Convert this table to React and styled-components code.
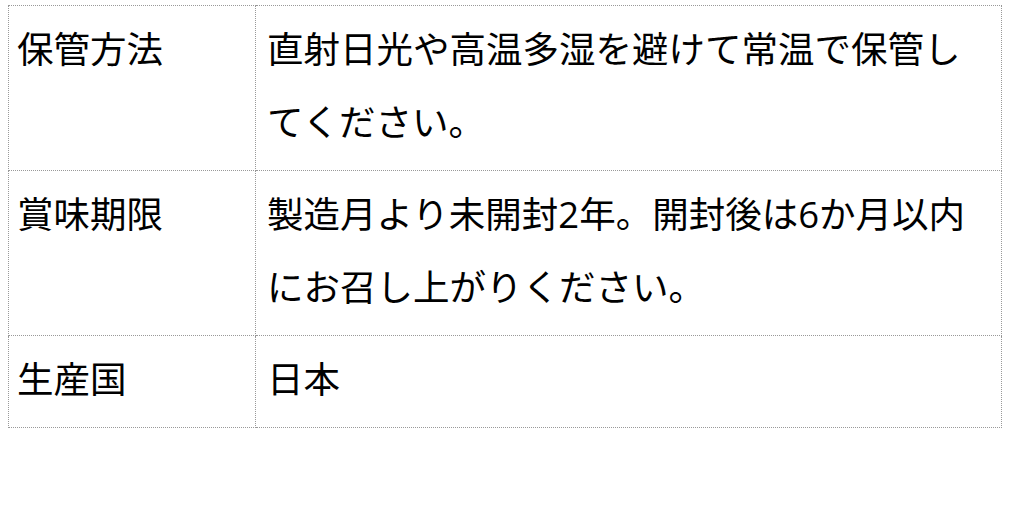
import styled, { createGlobalStyle } from 'styled-components';

const GlobalStyle = createGlobalStyle`
  html, body {
    margin: 0;
    padding: 0;
    background: #fff;
  }
  body {
    font-family: "Open Sans", "Noto Sans CJK JP", sans-serif;
    color: #000;
  }
`;

const specs = [
  { label: '保管方法', value: '直射日光や高温多湿を避けて常温で保管してください。' },
  { label: '賞味期限', value: '製造月より未開封2年。開封後は6か月以内にお召し上がりください。' },
  { label: '生産国', value: '日本' },
];

const App = () => (
  <>
    <GlobalStyle />
    <SpecTable>
      <colgroup>
        <LabelCol />
        <col />
      </colgroup>
      <tbody>
        {specs.map(({ label, value }) => (
          <Row key={label}>
            <Label>{label}</Label>
            <Value>{value}</Value>
          </Row>
        ))}
      </tbody>
    </SpecTable>
  </>
);

export const SpecTable = styled.table`
  width: calc(100% - 16px);
  margin: 5px 8px 0;
  border-collapse: collapse;
  table-layout: fixed;
  font-size: 36.5px;
  line-height: 2;
`;

export const LabelCol = styled.col`
  width: 247px;
`;

export const Row = styled.tr``;

export const Label = styled.th`
  padding: 7px 8px 11px;
  border: 1px dotted #999;
  text-align: left;
  vertical-align: top;
  font-weight: normal;
`;

export const Value = styled.td`
  padding: 7px 10px 11px 11px;
  border: 1px dotted #999;
  vertical-align: top;
`;

export default App;
